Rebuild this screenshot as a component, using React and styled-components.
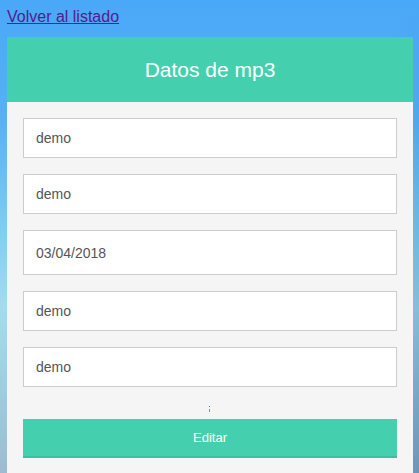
import React from 'react';
import styled, { createGlobalStyle } from 'styled-components';

const GlobalStyle = createGlobalStyle`
    html, body {
        min-height: 100%;
    }
    body {
        margin: 8px 6px 0 7px;
        font-family: 'Liberation Sans', Arial, sans-serif;
        background:
            linear-gradient(to bottom right, rgba(0,40,90,0) 50%, rgba(0,50,110,0.28) 100%),
            linear-gradient(180deg, #4aa8f8 0%, #55b0f6 25%, #7fd0f4 50%, #a3dcee 65%, #9cbcd0 100%);
        background-attachment: fixed;
        min-height: 473px;
        overflow: hidden;
    }
`

const BackLink = styled.a`
    display: inline-block;
    font-size: 16px;
    line-height: 18px;
    color: #551a8b;
    text-decoration: underline;
`

const Card = styled.div`
    margin-top: 11px;
    background: #f5f5f5;
    min-height: 440px;
`

const CardHeader = styled.div`
    height: 65px;
    display: flex;
    align-items: center;
    justify-content: center;
    background: #44d0ae;

    & h2 {
        margin: 0;
        color: #fff;
        font-size: 21px;
        font-weight: normal;
    }
`

const StyledForm = styled.form`
    display: flex;
    flex-flow: column nowrap;
    gap: 16px;
    padding: 16px;
`

const StyledInput = styled.input`
    box-sizing: border-box;
    width: 100%;
    height: ${props => props.$tall ? '45px' : '40px'};
    padding: 0 12px;
    border: 1px solid #ccc;
    background: #fff;
    font-family: 'Liberation Sans', Arial, sans-serif;
    font-size: 14px;
    color: #555;
    outline: none;
`

const Dots = styled.div`
    height: 0;
    position: relative;

    &::before, &::after {
        content: '';
        position: absolute;
        left: 186px;
        width: 1px;
        background: #3a7bbf;
    }
    &::before { top: 3px; height: 1px; }
    &::after { top: 6px; height: 3px; background: #c08a3a; }
`

const StyledButton = styled.button`
    box-sizing: border-box;
    width: 100%;
    height: 39px;
    border: none;
    border-bottom: 2px solid #35c49c;
    background: #44d0ae;
    color: #fff;
    font-family: 'Liberation Sans', Arial, sans-serif;
    font-size: 13px;
    cursor: pointer;
`

const fields = [
    { value: 'demo' },
    { value: 'demo' },
    { value: '03/04/2018', tall: true },
    { value: 'demo' },
    { value: 'demo' },
]

export default function App() {
    return (
        <>
            <GlobalStyle />
            <BackLink href="#">Volver al listado</BackLink>
            <Card>
                <CardHeader>
                    <h2>Datos de mp3</h2>
                </CardHeader>
                <StyledForm onSubmit={e => e.preventDefault()}>
                    {fields.map((f, i) => (
                        <StyledInput key={i} $tall={f.tall} defaultValue={f.value} />
                    ))}
                    <Dots />
                    <StyledButton>Editar</StyledButton>
                </StyledForm>
            </Card>
        </>
    )
}
